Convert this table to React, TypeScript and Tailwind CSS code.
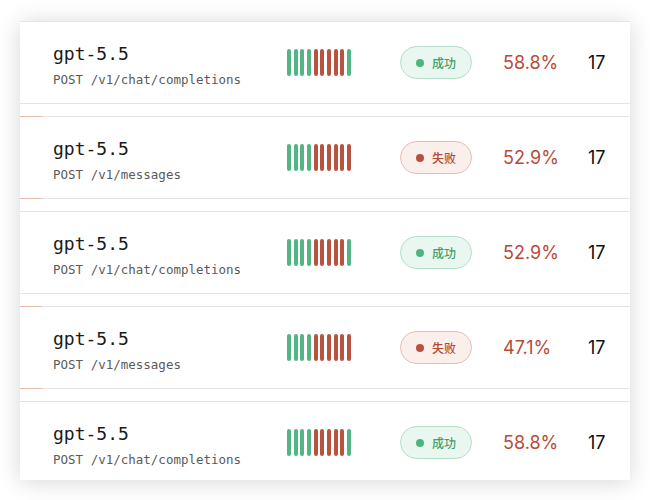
import { clsx } from 'clsx';

type Row = {
  model: string;
  path: string;
  ok: boolean;
  bars: string; // g = green, r = red
  rate: string;
  count: number;
};

const rows: Row[] = [
  { model: 'gpt-5.5', path: 'POST /v1/chat/completions', ok: true, bars: 'ggggrrrrrg', rate: '58.8%', count: 17 },
  { model: 'gpt-5.5', path: 'POST /v1/messages', ok: false, bars: 'ggggrrrrrr', rate: '52.9%', count: 17 },
  { model: 'gpt-5.5', path: 'POST /v1/chat/completions', ok: true, bars: 'ggggrrrrrg', rate: '52.9%', count: 17 },
  { model: 'gpt-5.5', path: 'POST /v1/messages', ok: false, bars: 'ggggrrrrrr', rate: '47.1%', count: 17 },
  { model: 'gpt-5.5', path: 'POST /v1/chat/completions', ok: true, bars: 'ggggrrrrrg', rate: '58.8%', count: 17 },
];

const mono = 'font-["DejaVu_Sans_Mono","Liberation_Mono",monospace]';

function StatusBadge({ ok }: { ok: boolean }) {
  return (
    <span
      className={clsx(
        'inline-flex items-center gap-2 h-[33px] px-[15px] rounded-full border font-["Noto_Sans_CJK_SC",sans-serif] text-[12px] font-medium',
        ok ? 'bg-[#eaf7f1] border-[#b3dfca] text-[#3f9f6d]' : 'bg-[#fbefec] border-[#e3beb5] text-[#b04a39]'
      )}
    >
      <span className={clsx('w-2 h-2 rounded-full', ok ? 'bg-[#4db67f]' : 'bg-[#b9503e]')} />
      {ok ? '成功' : '失败'}
    </span>
  );
}

function LogRow({ r }: { r: Row }) {
  return (
    <div className="relative h-[83px] shrink-0 border-y border-[#e4e4e4] grid grid-cols-[234px_113px_103px_85px_auto] items-center pl-[33px]">
      {!r.ok && (
        <>
          <span className="absolute left-0 top-[-1px] w-[22px] h-px bg-[#e9b9ae]" />
          <span className="absolute left-0 bottom-[-1px] w-[22px] h-px bg-[#e9b9ae]" />
        </>
      )}
      <div className="flex flex-col mt-[6px]">
        <span className={clsx(mono, 'text-[18px] leading-[24px] text-[#1a1a1a]')}>{r.model}</span>
        <span className={clsx(mono, 'text-[12.5px] leading-[18px] text-[#5a5a5a] mt-[5px]')}>{r.path}</span>
      </div>
      <div className="flex gap-[2.67px] h-[27px]">
        {r.bars.split('').map((b, i) => (
          <span key={i} className={clsx('w-1 h-full rounded-full', b === 'g' ? 'bg-[#52b583]' : 'bg-[#b9533f]')} />
        ))}
      </div>
      <div>
        <StatusBadge ok={r.ok} />
      </div>
      <span className="font-['Inter',sans-serif] text-[18px] text-[#b84b38]">{r.rate}</span>
      <span className="font-['Inter',sans-serif] text-[18px] text-[#111]">{r.count}</span>
    </div>
  );
}

export default function App() {
  return (
    <div className="w-[650px] h-[500px] bg-white pt-[21px] px-[20px]">
      <div className="h-[459px] bg-white overflow-hidden flex flex-col gap-[12px] shadow-[0_2px_22px_rgba(0,0,0,0.16)]">
        {rows.map((r, i) => (
          <LogRow key={i} r={r} />
        ))}
      </div>
    </div>
  );
}
